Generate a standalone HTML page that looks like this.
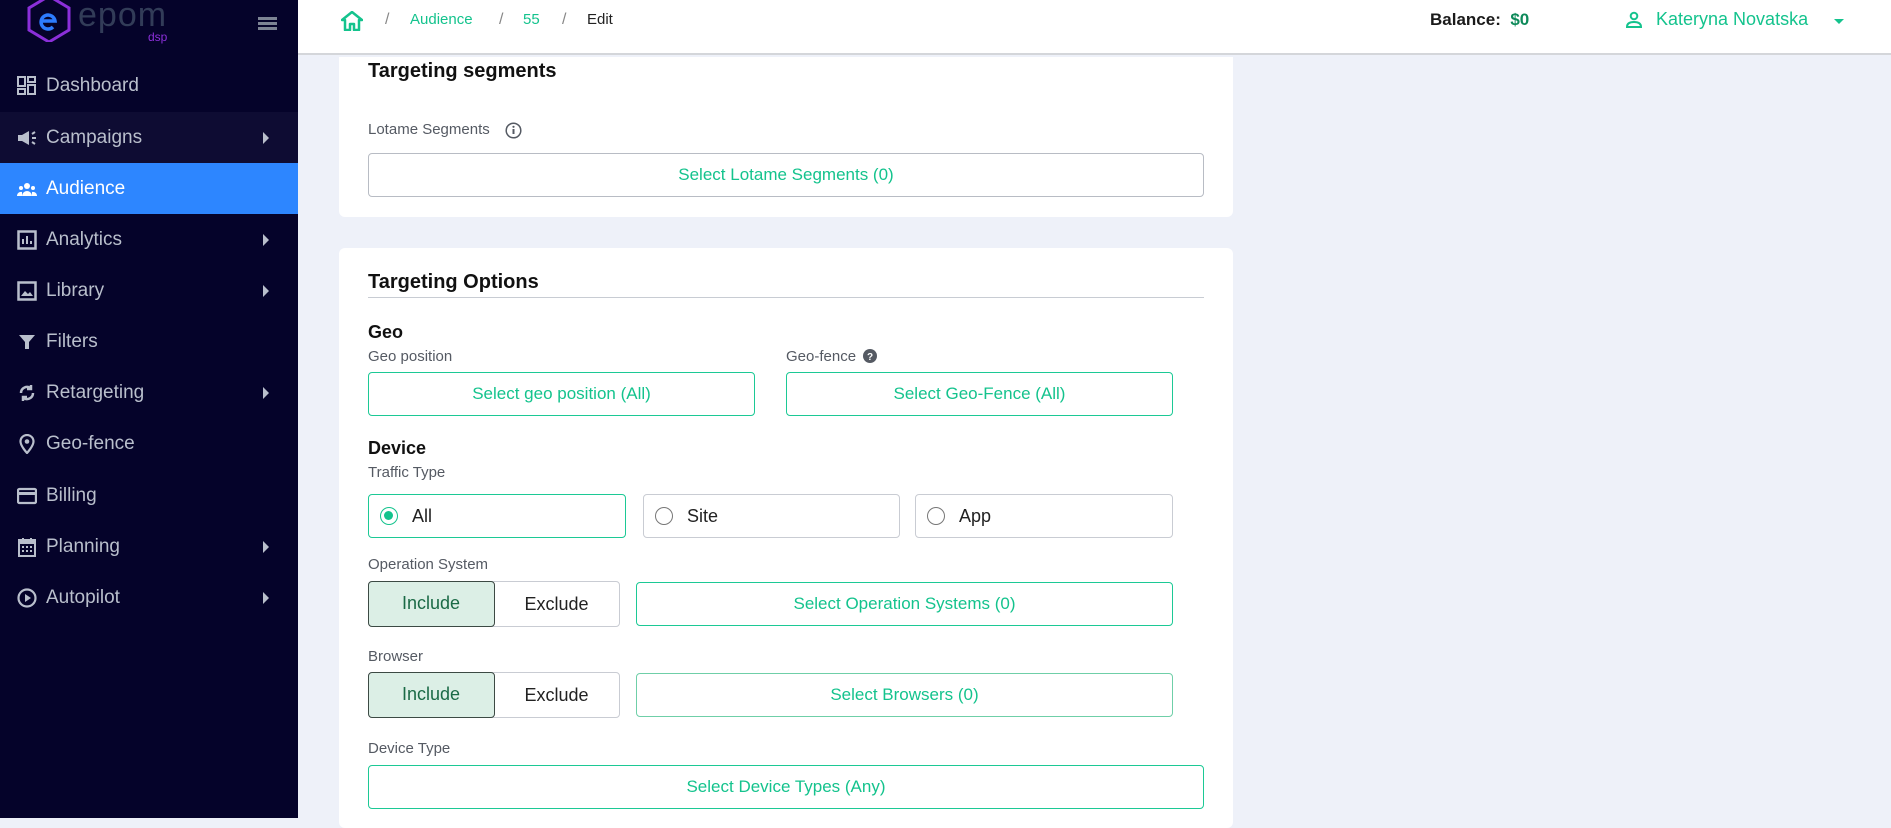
<!DOCTYPE html>
<html><head><meta charset="utf-8"><style>
*{box-sizing:border-box;margin:0;padding:0}
body{width:1891px;height:818px;overflow:hidden;background:#eef1f9;font-family:"Liberation Sans",sans-serif;position:relative}
.abs{position:absolute}
#sb{left:0;top:0;width:298px;height:818px;background:#05032a}
.mi{position:absolute;left:0;width:298px;height:51px;color:#b9bfcc;font-size:19px;display:flex;align-items:center}
.mi .ic{position:absolute;left:17px;width:20px;height:20px}
.mi .t{position:absolute;left:46px}
.mi .ch{position:absolute;left:263px;width:0;height:0;border-top:6px solid transparent;border-bottom:6px solid transparent;border-left:6px solid #b9bfcc}
#hd{left:298px;top:0;width:1593px;height:55px;background:#fff;border-bottom:2px solid #d4d6da}
.card{position:absolute;background:#fff;border-radius:6px;left:339px;width:894px}
.lbl{position:absolute;font-size:15px;color:#555a63}
.h{position:absolute;font-size:18px;font-weight:bold;color:#111}
.btn{position:absolute;border:1.5px solid #1cc995;border-radius:4px;color:#14c38d;font-size:17px;display:flex;align-items:center;justify-content:center;background:#fff}
.rad{position:absolute;border:1.5px solid #c9ccd3;border-radius:4px;font-size:18px;color:#222;height:44px;display:flex;align-items:center;background:#fff}
.rad .c{width:18px;height:18px;border:1.5px solid #777;border-radius:50%;margin:0 14px 0 11px;position:relative}
.seg{position:absolute;height:46px;width:252px;border:1.5px solid #c9ccd3;border-radius:4px;font-size:18px;background:#fff}
.seg .inc{position:absolute;left:-1.5px;top:-1.5px;width:127px;height:46px;background:#dcefe6;border:1.5px solid #3c4a44;border-radius:4px;color:#1a6a46;display:flex;align-items:center;justify-content:center}
.seg .exc{position:absolute;left:125px;right:0;top:0;bottom:0;display:flex;align-items:center;justify-content:center;color:#222}
</style></head><body>
<div id="sb" class="abs">
 <svg class="abs" style="left:24px;top:0" width="50" height="42" viewBox="0 0 50 42"><path d="M25 -4 L45 8 L45 30 L25 42 L5 30 L5 8 Z" fill="none" stroke="#8b2fd9" stroke-width="3"/><path d="M17 21 h14 a7 7 0 1 0 -2 6" fill="none" stroke="#2d7cff" stroke-width="3.5"/></svg>
 <div class="abs" style="left:78px;top:-4px;font-size:34px;color:#323c58;letter-spacing:1px">epom</div>
 <div class="abs" style="left:148px;top:30px;font-size:12px;color:#8b2fd9">dsp</div>
 <div class="abs" style="left:258px;top:17px;width:19px;height:3px;background:#7d8494;box-shadow:0 5px 0 #7d8494,0 10px 0 #7d8494"></div>
 <div class="mi" style="top:60px"><svg class="ic" viewBox="0 0 20 20" fill="#b9bfcc"><rect x="1" y="1" width="7" height="9" fill="none" stroke="#b9bfcc" stroke-width="2"/><rect x="11" y="1" width="7" height="5" fill="none" stroke="#b9bfcc" stroke-width="2"/><rect x="1" y="13" width="7" height="5" fill="none" stroke="#b9bfcc" stroke-width="2"/><rect x="11" y="9" width="7" height="9" fill="none" stroke="#b9bfcc" stroke-width="2"/></svg><span class="t">Dashboard</span></div>
 <div class="mi" style="top:112px;background:#0e0c33"><svg class="ic" viewBox="0 0 20 20" fill="#b9bfcc"><path d="M1 7h4l7-4v14l-7-4H1z"/><path d="M15 6l3-2M15 10h4M15 14l3 2" stroke="#b9bfcc" stroke-width="2"/></svg><span class="t">Campaigns</span><span class="ch"></span></div>
 <div class="mi" style="top:163px;background:#2d86ff;color:#fff"><svg class="ic" viewBox="0 0 20 20" fill="#fff"><circle cx="10" cy="7" r="3"/><circle cx="4" cy="9" r="2"/><circle cx="16" cy="9" r="2"/><path d="M5 17a5 5 0 0 1 10 0zM0 17a4 4 0 0 1 5-4v4zM20 17a4 4 0 0 0-5-4v4z"/></svg><span class="t">Audience</span></div>
 <div class="mi" style="top:214px"><svg class="ic" viewBox="0 0 20 20"><rect x="1.5" y="1.5" width="17" height="17" fill="none" stroke="#b9bfcc" stroke-width="2.5"/><path d="M6 14V9M10 14V6M14 14v-3" stroke="#b9bfcc" stroke-width="2"/></svg><span class="t">Analytics</span><span class="ch"></span></div>
 <div class="mi" style="top:265px"><svg class="ic" viewBox="0 0 20 20"><rect x="1.5" y="1.5" width="17" height="17" fill="none" stroke="#b9bfcc" stroke-width="2.5"/><path d="M4 15l4-5 3 3 2-2 3 4z" fill="#b9bfcc"/></svg><span class="t">Library</span><span class="ch"></span></div>
 <div class="mi" style="top:316px"><svg class="ic" viewBox="0 0 20 20"><path d="M2 3h16l-6 7v7h-4v-7z" fill="#b9bfcc"/></svg><span class="t">Filters</span></div>
 <div class="mi" style="top:367px"><svg class="ic" viewBox="0 0 20 20" fill="none" stroke="#b9bfcc" stroke-width="2.5"><path d="M4 10a6 6 0 0 1 10-4.5M16 10a6 6 0 0 1-10 4.5"/><path d="M14 2v4h-4M6 18v-4h4"/></svg><span class="t">Retargeting</span><span class="ch"></span></div>
 <div class="mi" style="top:418px"><svg class="ic" viewBox="0 0 20 20"><path d="M10 1a6.5 6.5 0 0 0-6.5 6.5C3.5 12 10 19 10 19s6.5-7 6.5-11.5A6.5 6.5 0 0 0 10 1z" fill="none" stroke="#b9bfcc" stroke-width="2.2"/><circle cx="10" cy="7.5" r="2.3" fill="#b9bfcc"/></svg><span class="t">Geo-fence</span></div>
 <div class="mi" style="top:470px"><svg class="ic" viewBox="0 0 20 20"><rect x="1" y="3" width="18" height="14" rx="1.5" fill="none" stroke="#b9bfcc" stroke-width="2.3"/><rect x="1" y="6" width="18" height="3" fill="#b9bfcc"/></svg><span class="t">Billing</span></div>
 <div class="mi" style="top:521px"><svg class="ic" viewBox="0 0 20 20"><rect x="2" y="3" width="16" height="16" fill="none" stroke="#b9bfcc" stroke-width="2"/><rect x="2" y="3" width="16" height="4" fill="#b9bfcc"/><path d="M6 1v4M14 1v4" stroke="#b9bfcc" stroke-width="2"/><path d="M5 10h2M9 10h2M13 10h2M5 14h2M9 14h2M13 14h2" stroke="#b9bfcc" stroke-width="2"/></svg><span class="t">Planning</span><span class="ch"></span></div>
 <div class="mi" style="top:572px"><svg class="ic" viewBox="0 0 20 20"><circle cx="10" cy="10" r="8.5" fill="none" stroke="#b9bfcc" stroke-width="2.2"/><path d="M8 6v8l6-4z" fill="#b9bfcc"/></svg><span class="t">Autopilot</span><span class="ch"></span></div>
</div>
<div id="hd" class="abs">
 <svg class="abs" style="left:43px;top:11px" width="22" height="20" viewBox="0 0 22 20"><path d="M11 1L1 9h3v10h5v-6h4v6h5V9h3z" fill="none" stroke="#14c38d" stroke-width="2.5" stroke-linejoin="round"/></svg>
 <div class="abs" style="left:87px;top:11px;font-size:16px;color:#888">/</div>
 <div class="abs" style="left:112px;top:11px;font-size:15px;color:#14c38d">Audience</div>
 <div class="abs" style="left:201px;top:11px;font-size:16px;color:#888">/</div>
 <div class="abs" style="left:225px;top:11px;font-size:15px;color:#14c38d">55</div>
 <div class="abs" style="left:264px;top:11px;font-size:16px;color:#888">/</div>
 <div class="abs" style="left:289px;top:11px;font-size:15px;color:#222">Edit</div>
 <div class="abs" style="left:1132px;top:10px;font-size:17px;color:#1a1a1a;font-weight:bold">Balance:&nbsp; <span style="color:#0e8a5a">$0</span></div>
 <svg class="abs" style="left:1328px;top:11px" width="16" height="18" viewBox="0 0 16 18"><circle cx="8" cy="5" r="3.3" fill="none" stroke="#14c38d" stroke-width="2"/><path d="M1 16c0-4 3-5 7-5s7 1 7 5z" fill="none" stroke="#14c38d" stroke-width="2"/></svg>
 <div class="abs" style="left:1358px;top:9px;font-size:18px;color:#14c38d">Kateryna Novatska</div>
 <div class="abs" style="left:1536px;top:19px;border-left:5px solid transparent;border-right:5px solid transparent;border-top:5px solid #14c38d"></div>
</div>
<div class="card" style="top:57px;height:160px;border-radius:0 0 6px 6px"></div>
<div class="h" style="left:368px;top:60px;font-size:20px">Targeting segments</div>
<div class="lbl" style="left:368px;top:121px">Lotame Segments</div>
<svg class="abs" style="left:505px;top:122px" width="17" height="17" viewBox="0 0 17 17"><circle cx="8.5" cy="8.5" r="7.3" fill="none" stroke="#555a63" stroke-width="1.5"/><path d="M8.5 7v5" stroke="#555a63" stroke-width="2"/><circle cx="8.5" cy="4.8" r="1.1" fill="#555a63"/></svg>
<div class="btn" style="left:368px;top:153px;width:836px;height:44px;border-color:#b8bcc4">Select Lotame Segments (0)</div>
<div class="card" style="top:248px;height:580px"></div>
<div class="h" style="left:368px;top:271px;font-size:20px">Targeting Options</div>
<div class="abs" style="left:368px;top:297px;width:836px;height:1px;background:#c8ccd3"></div>
<div class="h" style="left:368px;top:322px">Geo</div>
<div class="lbl" style="left:368px;top:348px">Geo position</div>
<div class="lbl" style="left:786px;top:348px">Geo-fence</div>
<svg class="abs" style="left:863px;top:349px" width="14" height="14" viewBox="0 0 14 14"><circle cx="7" cy="7" r="7" fill="#555a63"/><text x="7" y="11" font-size="10" font-weight="bold" fill="#fff" text-anchor="middle" font-family="Liberation Sans">?</text></svg>
<div class="btn" style="left:368px;top:372px;width:387px;height:44px">Select geo position (All)</div>
<div class="btn" style="left:786px;top:372px;width:387px;height:44px">Select Geo-Fence (All)</div>
<div class="h" style="left:368px;top:438px">Device</div>
<div class="lbl" style="left:368px;top:464px">Traffic Type</div>
<div class="rad" style="left:368px;top:494px;width:258px;border-color:#1cc995"><span class="c" style="border-color:#14c38d"><span style="position:absolute;left:3px;top:3px;width:9px;height:9px;border-radius:50%;background:#14c38d"></span></span>All</div>
<div class="rad" style="left:643px;top:494px;width:257px"><span class="c"></span>Site</div>
<div class="rad" style="left:915px;top:494px;width:258px"><span class="c"></span>App</div>
<div class="lbl" style="left:368px;top:556px">Operation System</div>
<div class="seg" style="left:368px;top:581px"><div class="inc">Include</div><div class="exc">Exclude</div></div>
<div class="btn" style="left:636px;top:582px;width:537px;height:44px">Select Operation Systems (0)</div>
<div class="lbl" style="left:368px;top:648px">Browser</div>
<div class="seg" style="left:368px;top:672px"><div class="inc">Include</div><div class="exc">Exclude</div></div>
<div class="btn" style="left:636px;top:673px;width:537px;height:44px;border-color:#6fcfa8">Select Browsers (0)</div>
<div class="lbl" style="left:368px;top:740px">Device Type</div>
<div class="btn" style="left:368px;top:765px;width:836px;height:44px">Select Device Types (Any)</div>
</body></html>
